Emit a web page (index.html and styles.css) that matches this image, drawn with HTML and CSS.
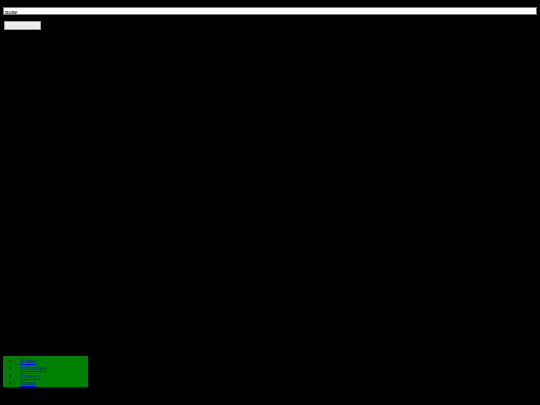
FILE: index.html
```html
<!DOCTYPE html>
<html>
<head>
<meta charset="utf-8">
<link rel="stylesheet" href="styles.css">
</head>
<body>
<div class="page">
  <input class="field" type="text" value="none">
  <button class="btn">................</button>
  <div class="spacer"></div>
  <nav class="nav">
    <ul class="menu">
      <li><a href="#">Home</a></li>
      <li><a href="#">Salvations</a></li>
      <li><a href="#">Contact</a></li>
      <li><a href="#">About</a></li>
    </ul>
  </nav>
</div>
</body>
</html>
```
FILE: styles.css
```css
html, body {
  margin: 0;
  padding: 0;
  background: #000;
}
.page {
  padding: 7px 3px 0 3px;
  font-family: "Liberation Serif", serif;
  font-size: 6.4px;
  display: flex;
  flex-direction: column;
  align-items: flex-start;
}
.field {
  box-sizing: border-box;
  width: 534px;
  height: 8px;
  margin: 0;
  padding: 0 1px;
  border: 1px solid #767676;
  background: #fff;
  color: #000;
  font-family: "Liberation Serif", serif;
  font-size: 6.4px;
  line-height: 6px;
  outline: none;
}
.btn {
  box-sizing: border-box;
  margin: 6px 0 0 1px;
  width: 37px;
  height: 8.5px;
  padding: 0;
  border: 1px solid #a0a0a0;
  background: #efefef;
  color: #9a9a9a;
  font-family: "Liberation Sans", sans-serif;
  font-size: 5px;
  line-height: 5px;
  letter-spacing: 0.2px;
}
.spacer {
  height: 326px;
}
.nav {
  width: 85px;
  height: 31px;
  background: #008000;
  box-sizing: border-box;
  padding-top: 1px;
}
.menu {
  margin: 0;
  padding: 0 0 0 17px;
  list-style: disc;
  color: #000;
}
.menu li {
  line-height: 7.5px;
  height: 7.5px;
  font-size: 6.4px;
}
.menu a {
  color: #0000ee;
  text-decoration: underline;
}
```
